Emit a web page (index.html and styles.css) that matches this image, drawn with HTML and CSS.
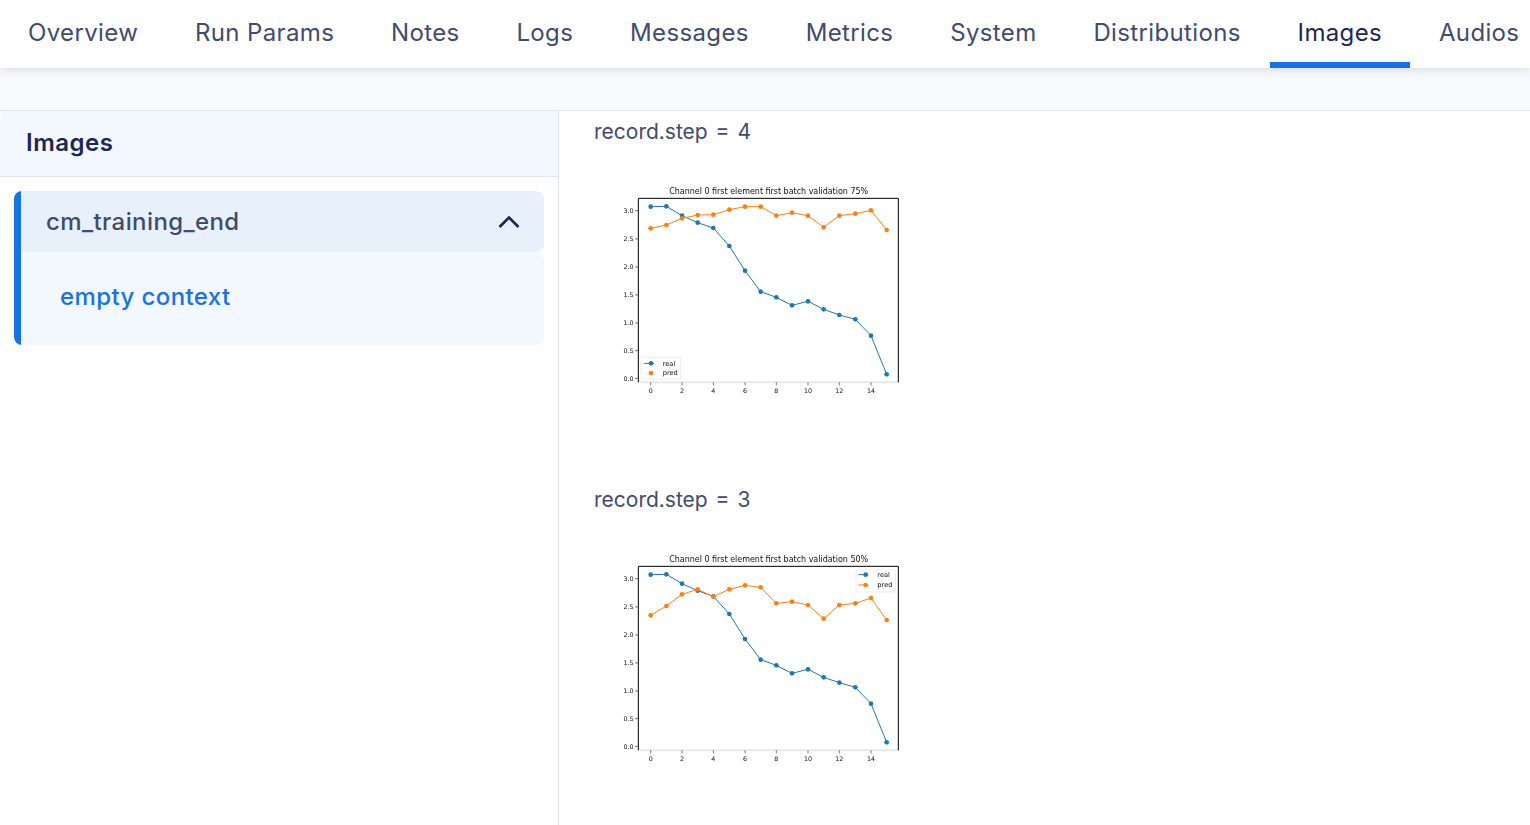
FILE: index.html
```html
<!DOCTYPE html>
<html lang="en">
    <head>
        <meta charset="UTF-8" />
        <title>Images</title>
        <link rel="stylesheet" href="styles.css">
    </head>
    <body>
        <nav class="tabs">
            <a class="tab" href="#">Overview</a>
            <a class="tab" href="#">Run Params</a>
            <a class="tab" href="#">Notes</a>
            <a class="tab" href="#">Logs</a>
            <a class="tab" href="#">Messages</a>
            <a class="tab" href="#">Metrics</a>
            <a class="tab" href="#">System</a>
            <a class="tab" href="#">Distributions</a>
            <a class="tab active" href="#">Images</a>
            <a class="tab" href="#">Audios</a>
        </nav>

        <div class="strip"></div>

        <div class="content">
            <aside class="sidebar">
                <h2 class="sidebar-title">Images</h2>
                <div class="accordion">
                    <div class="accordion-head">
                        <span>cm_training_end</span>
                        <svg class="chevron" width="22" height="12" viewBox="0 0 22 12"><path d="M1.5 11 L11 1.5 L20.5 11" /></svg>
                    </div>
                    <div class="accordion-body">
                        <a class="context" href="#">empty context</a>
                    </div>
                </div>
            </aside>

            <main class="records">
                <section class="record">
                    <div class="record-step">record.step = 4</div>
                    <svg class="plot" width="330" height="225" viewBox="0 0 990 675">
                        <defs>
                            <marker id="dot-blue" markerUnits="userSpaceOnUse" markerWidth="16" markerHeight="16" refX="8" refY="8"><circle cx="8" cy="8" r="7" fill="#1f77b4" /></marker>
                            <marker id="dot-orange" markerUnits="userSpaceOnUse" markerWidth="16" markerHeight="16" refX="8" refY="8"><circle cx="8" cy="8" r="7" fill="#ff7f0e" /></marker>
                        </defs>
                        <text class="plot-title" x="536" y="56" text-anchor="middle" textLength="597">Channel 0 first element first batch validation 75%</text>
                        <path class="spine-bottom" d="M145 622 H925" />
                        <path class="spine" d="M145 622 V70 H925 V622" />
                        <path class="tick" d="M135 107 H145 M135 192 H145 M135 276 H145 M135 360 H145 M135 444 H145 M135 527 H145 M135 610 H145 M182 622 V631 M276 622 V631 M370 622 V631 M465 622 V631 M559 622 V631 M654 622 V631 M748 622 V631 M843 622 V631" />
                        <g class="tick-label" text-anchor="end">
                            <text x="131" y="114">3.0</text><text x="131" y="199">2.5</text><text x="131" y="283">2.0</text><text x="131" y="367">1.5</text><text x="131" y="451">1.0</text><text x="131" y="534">0.5</text><text x="131" y="617">0.0</text>
                        </g>
                        <g class="tick-label" text-anchor="middle">
                            <text x="182" y="653">0</text><text x="276" y="653">2</text><text x="370" y="653">4</text><text x="465" y="653">6</text><text x="559" y="653">8</text><text x="654" y="653">10</text><text x="748" y="653">12</text><text x="843" y="653">14</text>
                        </g>
                        <polyline class="line-blue" points="182,95 229,94 276,122 323,143 370,159 418,213 465,287 512,350 559,367 606,391 654,379 701,403 748,420 796,433 843,482 890,598" />
                        <polyline class="line-orange" points="182,160 229,150 276,130 323,120 370,119 418,104 465,95 512,95 559,122 606,113 654,122 701,157 748,122 796,116 843,106 890,165" />
                        <rect class="legend" x="154" y="547" width="118" height="65" rx="4" />
                        <polyline class="legend-blue" points="163,565 183,565 192,565" />
                        <polyline class="legend-orange faint" points="163,594 183,594 192,594" />
                        <text class="legend-label" x="218" y="572">real</text>
                        <text class="legend-label" x="218" y="601">pred</text>
                    </svg>
                </section>

                <section class="record">
                    <div class="record-step">record.step = 3</div>
                    <svg class="plot" width="330" height="225" viewBox="0 -6 990 675">
                        <text class="plot-title" x="536" y="50" text-anchor="middle" textLength="597">Channel 0 first element first batch validation 50%</text>
                        <path class="spine-bottom" d="M145 616 H925" />
                        <path class="spine" d="M145 616 V64 H925 V616" />
                        <path class="tick" d="M135 101 H145 M135 186 H145 M135 270 H145 M135 354 H145 M135 438 H145 M135 521 H145 M135 604 H145 M182 616 V625 M276 616 V625 M370 616 V625 M465 616 V625 M559 616 V625 M654 616 V625 M748 616 V625 M843 616 V625" />
                        <g class="tick-label" text-anchor="end">
                            <text x="131" y="108">3.0</text><text x="131" y="193">2.5</text><text x="131" y="277">2.0</text><text x="131" y="361">1.5</text><text x="131" y="445">1.0</text><text x="131" y="528">0.5</text><text x="131" y="611">0.0</text>
                        </g>
                        <g class="tick-label" text-anchor="middle">
                            <text x="182" y="647">0</text><text x="276" y="647">2</text><text x="370" y="647">4</text><text x="465" y="647">6</text><text x="559" y="647">8</text><text x="654" y="647">10</text><text x="748" y="647">12</text><text x="843" y="647">14</text>
                        </g>
                        <polyline class="line-blue" points="182,89 229,88 276,116 323,137 370,154 418,207 465,282 512,344 559,361 606,385 654,373 701,397 748,413 796,427 843,476 890,592" />
                        <polyline class="line-orange" points="182,211 229,183 276,148 323,133 370,155 418,133 465,121 512,127 559,175 606,170 654,180 701,221 748,180 796,175 843,159 890,225" />
                        <rect class="legend" x="798" y="75" width="119" height="66" rx="4" />
                        <polyline class="legend-blue" points="805,89 827,89 835,89" />
                        <polyline class="legend-orange" points="805,120 827,120 835,120" />
                        <text class="legend-label" x="862" y="96">real</text>
                        <text class="legend-label" x="862" y="127">pred</text>
                    </svg>
                </section>
            </main>
        </div>
    </body>
</html>
```

FILE: styles.css
```css
html, body {
    margin: 0;
    padding: 0;
    height: 100%;
    overflow: hidden;
}

body {
    font-family: 'Inter', sans-serif;
    background-color: #ffffff;
    color: #414b6d;
    display: flex;
    flex-direction: column;
}

/* top tabs */
.tabs {
    display: flex;
    flex-shrink: 0;
    height: 68px;
    background-color: #ffffff;
    box-shadow: 0 2px 10px rgba(28, 40, 82, 0.14);
    position: relative;
}

.tab {
    box-sizing: border-box;
    height: 68px;
    padding: 15px 28px 0 28px;
    margin-right: 0.85px;
    border-bottom: 6px solid transparent;
    font-size: 24px;
    letter-spacing: 0.36px;
    line-height: 36px;
    color: #414b6d;
    text-decoration: none;
    white-space: nowrap;
}

.tab.active {
    color: #1c2852;
    border-bottom-color: #1473e6;
}

.strip {
    flex-shrink: 0;
    height: 42px;
    background-color: #f8fafe;
    border-bottom: 1px solid #dee6f3;
}

.content {
    display: flex;
    flex-grow: 1;
    min-height: 0;
}

/* left panel */
.sidebar {
    box-sizing: border-box;
    width: 559px;
    flex-shrink: 0;
    border-right: 1px solid #dee6f3;
}

.sidebar-title {
    margin: 0;
    height: 65px;
    padding-left: 26px;
    font-size: 24px;
    font-weight: 600;
    letter-spacing: 0.5px;
    line-height: 64px;
    color: #1c2852;
    background-color: #f3f7fe;
    border-bottom: 1px solid #dee6f3;
    border-top-left-radius: 8px;
}

.accordion {
    margin: 14px 14px 0 14px;
    border-left: 7px solid #1473e6;
    border-radius: 8px;
}

.accordion-head {
    box-sizing: border-box;
    display: flex;
    align-items: center;
    justify-content: space-between;
    height: 61px;
    padding: 0 24px 1px 25px;
    font-size: 24px;
    font-weight: 500;
    letter-spacing: 0.4px;
    background-color: #e8f0fb;
    border-radius: 0 8px 8px 0;
}

.chevron {
    margin-top: 1px;
}

.chevron path {
    fill: none;
    stroke: #1c2852;
    stroke-width: 2.6;
}

.accordion-body {
    height: 93px;
    padding-left: 39px;
    background-color: #f3f7fe;
    border-radius: 0 8px 8px 0;
}

.context {
    font-size: 24px;
    font-weight: 500;
    letter-spacing: 0.4px;
    line-height: 90px;
    color: #1473e6;
    text-decoration: none;
}

/* records */
.records {
    flex-grow: 1;
    padding-left: 31px;
    overflow: hidden;
}

.record {
    height: 368px;
}

.record-step {
    height: 42px;
    padding: 4px 0 0 4px;
    box-sizing: border-box;
    font-size: 21px;
    line-height: 34px;
    word-spacing: 2px;
    color: #414b6d;
}

.plot {
    display: block;
    margin-top: 22px;
    filter: blur(0.4px);
}

.plot text {
    font-family: 'DejaVu Sans', sans-serif;
    fill: #111111;
}

.plot-title {
    font-size: 24px;
}

.tick-label text {
    font-size: 19px;
}

.legend-label {
    font-size: 20px;
}

.spine {
    fill: none;
    stroke: #000000;
    stroke-width: 3;
}

.spine-bottom {
    fill: none;
    stroke: #e8e8e8;
    stroke-width: 6;
}

.tick {
    fill: none;
    stroke: #333333;
    stroke-width: 2;
}

.legend {
    fill: #ffffff;
    fill-opacity: 0.8;
    stroke: #e4e4e4;
    stroke-width: 2;
}

.line-blue,
.line-orange,
.legend-blue,
.legend-orange {
    fill: none;
    stroke-width: 3;
}

.line-blue,
.legend-blue {
    stroke: #1f77b4;
    marker-mid: url(#dot-blue);
}

.line-orange,
.legend-orange {
    stroke: #ff7f0e;
    marker-mid: url(#dot-orange);
}

.line-blue {
    marker-start: url(#dot-blue);
    marker-end: url(#dot-blue);
}

.line-orange {
    marker-start: url(#dot-orange);
    marker-end: url(#dot-orange);
}

.faint {
    stroke: #ffe6d0;
}
```
